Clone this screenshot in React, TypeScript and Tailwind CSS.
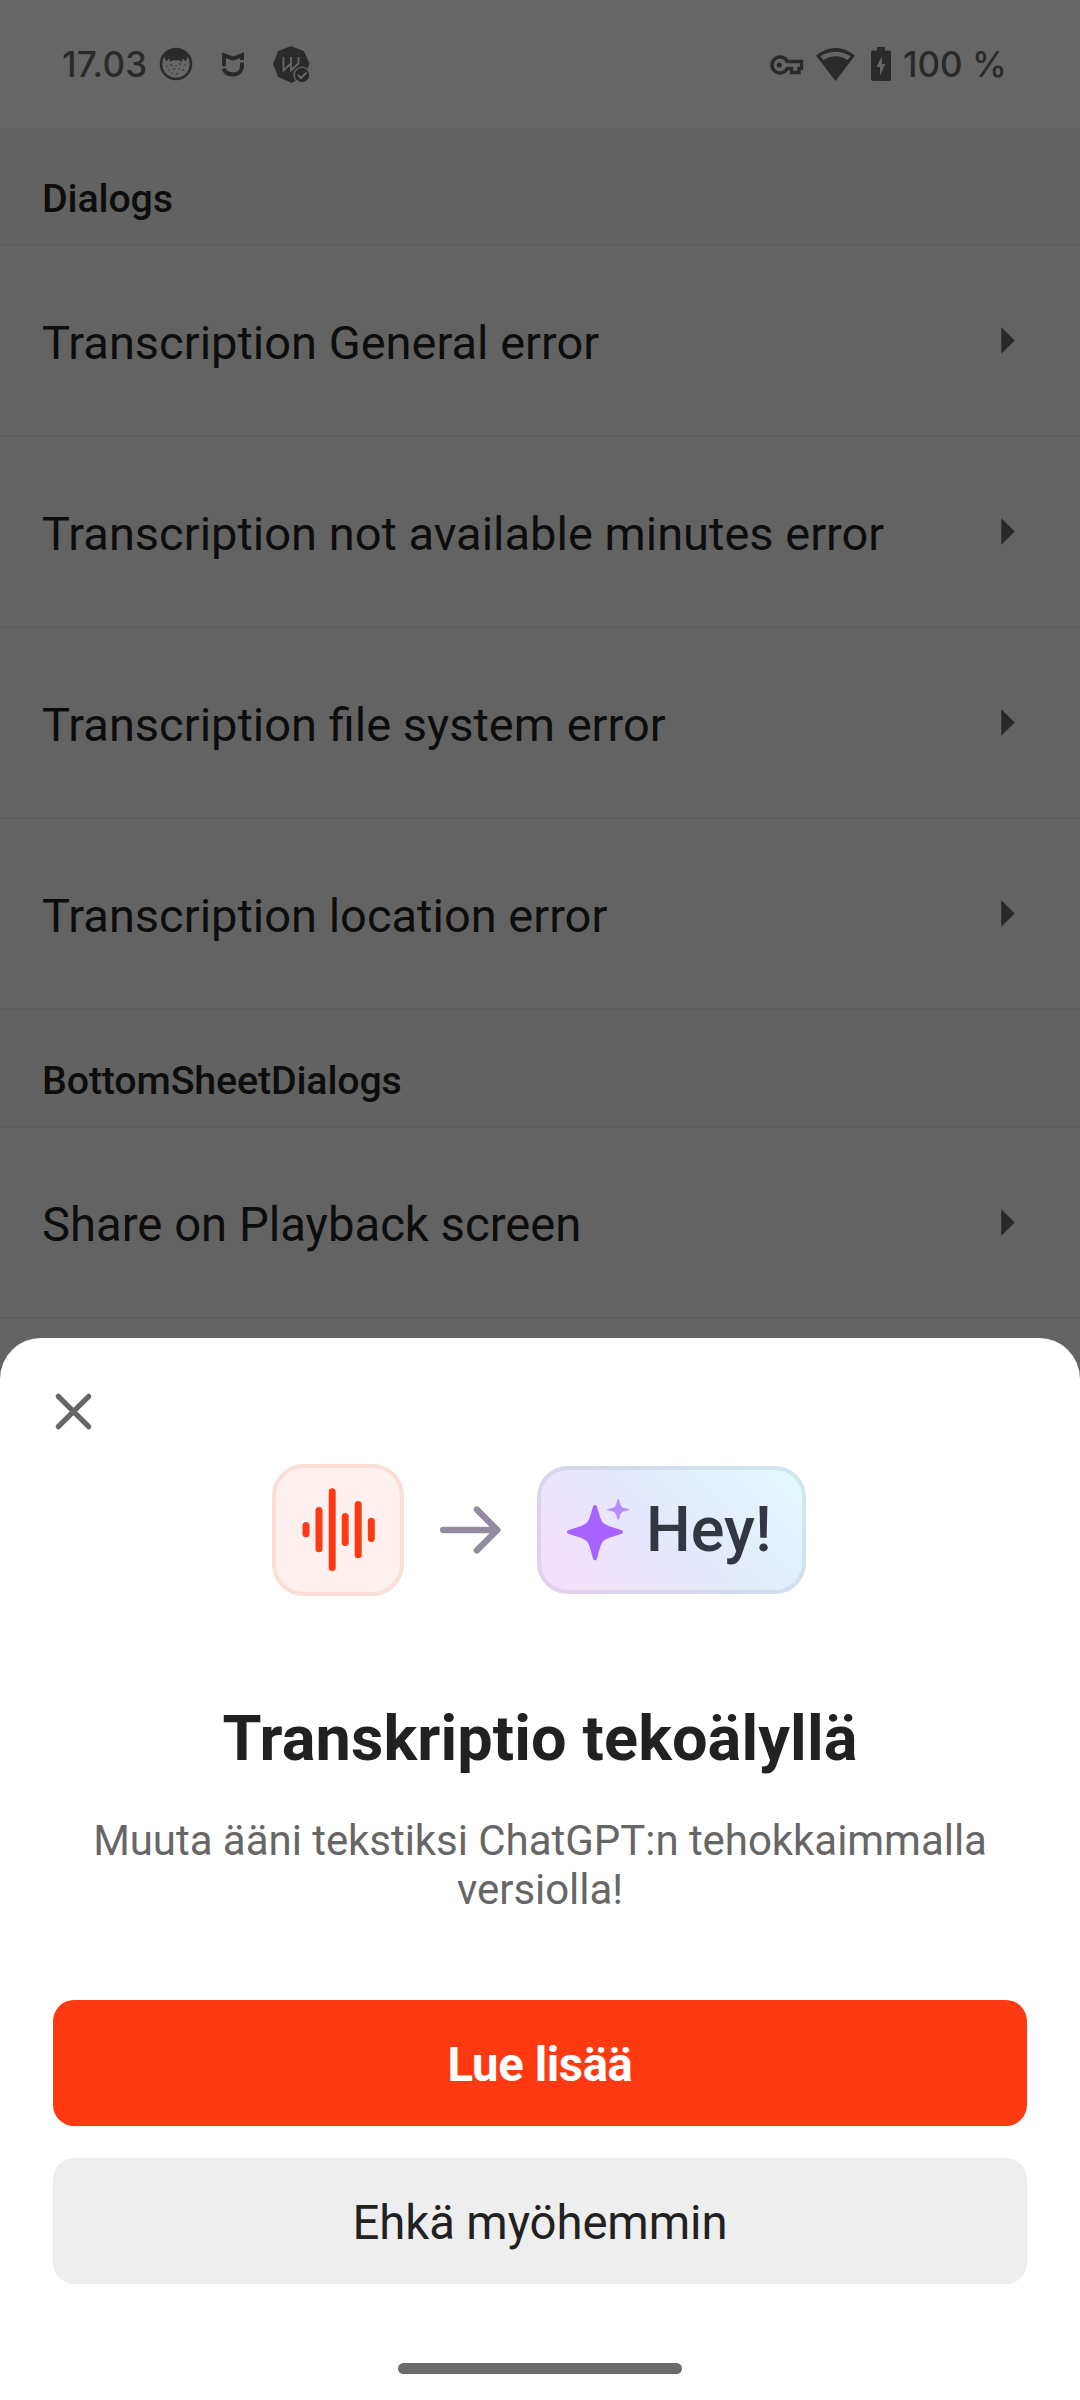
import React from "react";

function Line({ title, wide = false }: { title: string; wide?: boolean }) {
  return (
    <li className="flex h-[191px] items-center justify-between border-b-2 border-[#5e5e5e] bg-[#636363] pl-[42px] pr-[65px]">
      <span className={`leading-[47px] text-[#0d0d0d] ${wide ? "pt-[5px] text-[47.25px]" : "pt-[4px] text-[47px]"}`}>
        {title}
      </span>
      <svg className="h-[27px] w-[14px]" viewBox="0 0 14 27" fill="#282828">
        <path d="M0.3 0.3 13.7 13.5 0.3 26.7Z" />
      </svg>
    </li>
  );
}

function SectionHeader({ title }: { title: string }) {
  return (
    <h2 className="h-[118px] border-b-2 border-[#5e5e5e] bg-[#626262] pl-[42px] pt-[48px] text-[39.375px] font-medium leading-[46px] tracking-[-0.15px] text-[#0d0d0d]">
      {title}
    </h2>
  );
}

function StatusBar() {
  return (
    <header className="flex h-[128px] items-center justify-between bg-[#666666] pl-[62px] pr-[76px] font-['Inter',sans-serif] text-[35px] font-medium leading-none text-[#2a2a2a]">
      <div className="flex items-center">
        <span className="w-[97px] whitespace-nowrap tracking-[0.2px]">17.03</span>
        <svg className="h-[34px] w-[34px]" viewBox="0 0 34 34" fill="#2a2a2a">
          <circle cx="17" cy="17" r="15" fill="none" stroke="#2a2a2a" strokeWidth="2.6" />
          <path d="M5 10C8 4.500 12 2 17 2s9 2.500 12 8L26.500 14.500 24 11.500 22.500 15 20.500 13.300H13.500L11.500 15 10 11.500 7.500 14.500Z" />
          <g opacity="0.75">
            <circle cx="8" cy="19" r=".8" /><circle cx="12" cy="18" r=".9" /><circle cx="17" cy="18.500" r=".8" />
            <circle cx="21" cy="17" r="1" /><circle cx="26" cy="18" r=".8" /><circle cx="10" cy="23" r=".8" />
            <circle cx="15" cy="22" r=".9" /><circle cx="20" cy="22" r=".7" /><circle cx="24" cy="23" r=".9" />
            <circle cx="13" cy="26" r=".7" /><circle cx="18" cy="27" r=".9" />
          </g>
        </svg>
        <svg className="ml-[29px] h-[26px] w-[22px]" viewBox="0 0 22 26" fill="none" stroke="#2a2a2a" strokeWidth="4">
          <path d="M2 15.300V4.200L11 7.700 20 4.200V9" strokeLinejoin="miter" />
          <path d="M1.600 17.500C3 21.500 6.500 23.500 11 23.500c5.500 0 9-3.500 9-9V11.500" />
        </svg>
        <svg className="ml-[29px] h-[37px] w-[37px]" viewBox="0 0 37 37">
          <path d="M18 .6 30.500 5.500 36 17.500 31 30.500 18.500 36.400 5.500 30.500.6 18 5.500 5.500Z" fill="#2a2a2a" stroke="#2a2a2a" strokeLinejoin="round" />
          <path d="M10.500 11V24.500L18 17.500M18 11V24.500L25.500 17.500V11" fill="none" stroke="#666666" strokeWidth="1.800" />
          <circle cx="29" cy="29" r="8.600" fill="#666666" />
          <circle cx="29" cy="29" r="7.200" fill="#2a2a2a" />
          <path d="m25 29 3 3 5.500-5.500" fill="none" stroke="#666666" strokeWidth="2" />
        </svg>
      </div>
      <div className="flex items-center">
        <svg className="mt-[2px] h-[20px] w-[34px]" viewBox="0 0 34 20" fill="none" stroke="#2a2a2a" strokeWidth="3.400">
          <path d="M17.200 6.500A8 8 0 1 0 17.200 13.500H21.500V17.500H29V13.500H31.500V6.500Z" />
          <circle cx="9.300" cy="10" r="2.600" fill="#2a2a2a" stroke="none" />
        </svg>
        <svg className="ml-[12px] h-[33px] w-[39px]" viewBox="0 0 39 33" fill="#2a2a2a">
          <path fillRule="evenodd" d="M19.500 0C12 0 5.500 3 0 7.500L19.500 33 39 7.500C33.500 3 27 0 19.500 0ZM4.600 8.300C9 5.300 14 3.700 19.500 3.700S30 5.300 34.400 8.300L31.500 12C28 9.500 24 8.200 19.500 8.200S11 9.500 7.500 12Z" />
        </svg>
        <svg className="ml-[16px] h-[34px] w-[20px]" viewBox="0 0 20 34">
          <path d="M6 0H14V3.500H18Q20 3.500 20 5.500V32Q20 34 18 34H2Q0 34 0 32V5.500Q0 3.500 2 3.500H6Z" fill="#2a2a2a" />
          <path d="M10.800 9 5.500 20H9V28.500L14.500 17H10.800Z" fill="#666666" />
        </svg>
        <span className="ml-[12px] w-[101px] whitespace-nowrap">100 %</span>
      </div>
    </header>
  );
}

const bars = [
  [34, 58, 73.3],
  [47, 43, 88.3],
  [60.2, 24.3, 107],
  [73.2, 49, 82],
  [86.2, 37, 94.3],
  [99.3, 53.7, 78],
];

function Illustration() {
  return (
    <div className="flex h-[132px] items-center pl-[272px]">
      <div className="h-[132px] w-[132px] rounded-[32px] border-4 border-[#fbded8] bg-[#fef0ef]">
        <svg className="-m-1 h-[132px] w-[132px]" viewBox="0 0 132 132" fill="#ff3a12">
          {bars.map(([x, top, bottom]) => (
            <rect key={x} x={x - 3.5} y={top} width="7" height={bottom - top} rx="3.500" />
          ))}
        </svg>
      </div>
      <svg className="ml-[36px] h-[50px] w-[61px]" viewBox="0 0 61 50" fill="none" stroke="#948ba0" strokeWidth="6.300" strokeLinecap="round" strokeLinejoin="round">
        <path d="M3.200 25H57M36.800 4.500 57.300 25 36.800 45.500" />
      </svg>
      <div className="relative ml-[36px] flex h-[128px] w-[269px] items-center rounded-[31px] bg-[linear-gradient(45deg,#f5dffd_5%,#e4e9fd_50%,#e2f9ff_95%)]">
        <div className="absolute inset-0 rounded-[31px] border-4 border-[#35484818]" />
        <svg className="mb-[1px] ml-[30px] h-[62px] w-[63px]" viewBox="0 0 63 62">
          <path d="M28 6c1.200 0 1.800 1 2.200 2.200C32.500 16 33.500 20.500 36 23.500c2.500 2.600 8 4.500 17.500 7.200 1.600.5 2.500 1.200 2.500 2.200s-.9 1.800-2.500 2.300C44 38 38.500 39.500 36 42.500c-2.500 3-3.500 8-5.800 16.500-.4 1.500-1 2.300-2.200 2.300s-1.800-.8-2.200-2.300C23.500 50.500 22.500 45.500 20 42.500c-2.500-3-8-4.500-17.500-7.300C.9 34.700 0 33.900 0 32.900s.9-1.700 2.500-2.200C12 28 17.500 26.100 20 23.500c2.500-3 3.500-7.500 5.800-15.300C26.200 7 26.800 6 28 6Z" fill="#a763ff" />
          <path d="M51.200.3c.6 0 .8.500 1 1.200.8 3.500 1.300 5.200 2.500 6.300s3.600 1.600 6.800 2.200c.6.100.9.300.9.600s-.3.500-.9.600c-3.200.7-5.600 1.200-6.800 2.300s-1.700 3-2.500 6c-.2.700-.4 1.100-1 1.100s-.8-.4-1-1.100c-.8-3-1.300-4.900-2.500-6s-3.600-1.600-6.800-2.300c-.6-.1-.9-.3-.9-.6s.3-.5.900-.6c3.200-.6 5.600-1.100 6.800-2.200s1.700-2.800 2.500-6.300c.2-.7.4-1.200 1-1.200Z" fill="#b98aff" />
        </svg>
        <span className="mb-[2px] ml-[16px] text-[63px] font-medium leading-none text-[#333744]">Hey!</span>
      </div>
    </div>
  );
}

function BottomSheet() {
  return (
    <section className="absolute inset-x-0 top-[1338px] flex h-[1062px] flex-col rounded-t-[41px] bg-white">
      <button aria-label="Sulje" className="ml-[54px] mt-[54px] h-[39px] w-[39px]">
        <svg className="h-full w-full" viewBox="0 0 39 39" fill="none" stroke="#666666" strokeWidth="5.200" strokeLinecap="round">
          <path d="M4.300 4.300 34.700 34.700M34.700 4.300 4.300 34.700" />
        </svg>
      </button>
      <div className="mt-[33px]">
        <Illustration />
      </div>
      <h1 className="mt-[106px] text-center text-[63px] font-bold leading-[74px] tracking-[0.13px] text-[#212121]">Transkriptio tekoälyllä</h1>
      <p className="mx-[53px] mt-[40px] text-center text-[42px] leading-[49px] tracking-[-0.04px] text-[#666666]">
        Muuta ääni tekstiksi ChatGPT:n tehokkaimmalla versiolla!
      </p>
      <div className="mx-[53px] mt-[86px] flex flex-col gap-8">
        <button className="h-[126px] rounded-[21px] bg-[#ff3a12] pt-1 text-[47.25px] font-bold tracking-[-0.4px] text-white">Lue lisää</button>
        <button className="h-[126px] rounded-[21px] bg-[#eeeeee] pt-1 text-[47.25px] tracking-[-0.1px] text-[#212121]">Ehkä myöhemmin</button>
      </div>
      <div className="mx-auto mt-[79px] h-[11px] w-[284px] rounded-full bg-[#6b6b6b]" />
    </section>
  );
}

export default function App() {
  return (
    <main className="relative h-[2400px] w-[1080px] overflow-hidden bg-[#636363] font-['Roboto',sans-serif]">
      <StatusBar />
      <SectionHeader title="Dialogs" />
      <ul>
        <Line title="Transcription General error" />
        <Line title="Transcription not available minutes error" />
        <Line title="Transcription file system error" />
        <Line title="Transcription location error" />
      </ul>
      <SectionHeader title="BottomSheetDialogs" />
      <ul>
        <Line title="Share on Playback screen" wide />
      </ul>
      <BottomSheet />
    </main>
  );
}
